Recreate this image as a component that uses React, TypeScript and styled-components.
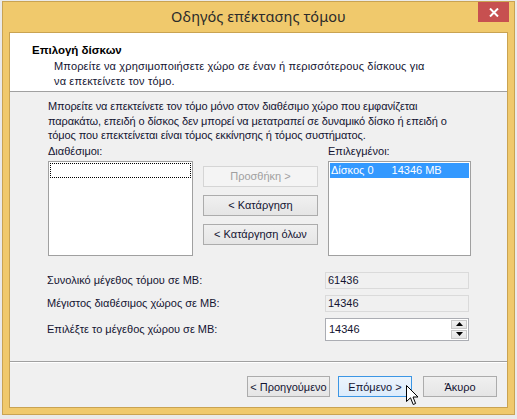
import React from "react";
import styled, { createGlobalStyle } from "styled-components";

const GlobalStyle = createGlobalStyle`
  html, body {
    margin: 0;
    padding: 0;
    background: #eaeaea;
    width: 517px;
    height: 419px;
    overflow: hidden;
  }
  * { box-sizing: border-box; }
`;

const Desktop = styled.div`
  position: relative;
  width: 517px;
  height: 419px;
  padding: 1px 0 0 2px;
  font-family: "Liberation Sans", Arial, sans-serif;
  font-size: 11px;
  color: #141432;
`;

const Window = styled.div`
  width: 513px;
  height: 414px;
  background: #f0c96c;
  border: 1px solid #c9a352;
  display: flex;
  flex-direction: column;
  padding: 0 6px 6px 6px;
`;

const TitleBar = styled.div`
  height: 30px;
  display: grid;
  grid-template-columns: 1fr auto 1fr;
  align-items: start;
`;

const TitleText = styled.div`
  grid-column: 2;
  padding-top: 4px;
  font-family: "Noto Sans", "Open Sans", sans-serif;
  font-size: 14.5px;
  color: #2b2b2b;
  letter-spacing: 0.1px;
`;

const CloseButton = styled.div`
  grid-column: 3;
  justify-self: end;
  margin-right: -1px;
  width: 31px;
  height: 20px;
  background: #c75050;
  display: flex;
  align-items: center;
  justify-content: center;
`;

const Client = styled.div`
  flex: 1;
  border: 1px solid #c9a352;
  background: #f0f0f0;
  display: flex;
  flex-direction: column;
`;

const Header = styled.div`
  height: 59px;
  background: #ffffff;
  border-bottom: 1px solid #a0a0a0;
  padding: 10px 0 0 22px;
`;

const HeaderTitle = styled.div`
  font-weight: bold;
  color: #000;
  font-size: 11.5px;
  line-height: 14px;
  margin-bottom: 2px;
`;

const HeaderSub = styled.div`
  padding-left: 22px;
  line-height: 15px;
  white-space: nowrap;
  letter-spacing: 0.15px;
`;

const Body = styled.div`
  padding: 7px 0 0 38px;
  display: flex;
  flex-direction: column;
`;

const Paragraph = styled.div`
  line-height: 14.5px;
  white-space: nowrap;
  letter-spacing: -0.1px;
`;

const PickerGrid = styled.div`
  display: grid;
  grid-template-columns: 145px 115px 143px;
  column-gap: 10px;
  grid-template-rows: 15px 95px;
  row-gap: 2px;
  margin-top: 1px;
`;

const ListLabel = styled.div<{ $col: number }>`
  grid-column: ${({ $col }) => $col};
  line-height: 15px;
`;

const ListBox = styled.div`
  border: 1px solid #a0a0a0;
  background: #fff;
  padding: 1px;
`;

const FocusRow = styled.div`
  height: 15px;
  border: 1px dotted #000;
`;

const SelectedRow = styled.div`
  height: 15px;
  background: #3399ff;
  color: #fff;
  display: flex;
  align-items: center;
  padding-left: 1px;
  gap: 18px;
`;

const ButtonStack = styled.div`
  display: flex;
  flex-direction: column;
  gap: 8px;
  padding-top: 5px;
`;

const Button = styled.div<{ $disabled?: boolean; $focused?: boolean; $width?: number }>`
  height: 21px;
  width: ${({ $width }) => ($width ? `${$width}px` : "auto")};
  display: flex;
  align-items: center;
  justify-content: center;
  border: 1px solid
    ${({ $disabled, $focused }) => ($disabled ? "#d5d5d5" : $focused ? "#3c96e4" : "#acacac")};
  background: ${({ $disabled, $focused }) =>
    $disabled
      ? "#f4f4f4"
      : $focused
      ? "linear-gradient(#ecf4fc, #dcecfc)"
      : "linear-gradient(#f0f0f0, #e5e5e5)"};
  color: ${({ $disabled }) => ($disabled ? "#a0a0a0" : "#141432")};
  white-space: nowrap;
`;

const FieldRows = styled.div`
  display: grid;
  grid-template-columns: 278px 144px;
  row-gap: 6px;
  margin-top: 16px;
  margin-left: -1px;
  align-items: center;
`;

const FieldLabel = styled.div`
  line-height: 15px;
`;

const ReadOnlyField = styled.div`
  height: 17px;
  border: 1px solid #dadada;
  background: #f0f0f0;
  padding-left: 2px;
  display: flex;
  align-items: center;
`;

const SpinBox = styled.div`
  height: 23px;
  border: 1px solid #abadb3;
  background: #fff;
  display: flex;
  align-items: center;
  padding: 0 1px 0 3px;
`;

const SpinValue = styled.div`
  flex: 1;
`;

const SpinButtons = styled.div`
  display: flex;
  flex-direction: column;
  gap: 1px;
`;

const SpinArrow = styled.div`
  width: 16px;
  height: 9px;
  border: 1px solid #c8c8c8;
  background: linear-gradient(#f2f2f2, #e4e4e4);
  display: flex;
  align-items: center;
  justify-content: center;
`;

const Separator = styled.div`
  margin-top: auto;
  height: 2px;
  border-top: 1px solid #a0a0a0;
  border-bottom: 1px solid #ffffff;
`;

const Footer = styled.div`
  display: flex;
  justify-content: flex-end;
  gap: 11px;
  padding: 13px 10px 10px 0;
`;

const FooterGroup = styled.div`
  display: flex;
  gap: 8px;
`;

const Cursor = styled.svg`
  position: absolute;
  left: 406px;
  top: 385px;
`;

const Triangle: React.FC<{ up?: boolean }> = ({ up }) => (
  <svg width="7" height="4" viewBox="0 0 7 4">
    <path d={up ? "M0 4 L3.5 0 L7 4 Z" : "M0 0 L3.5 4 L7 0 Z"} fill="#000" />
  </svg>
);

const App: React.FC = () => (
  <>
    <GlobalStyle />
    <Desktop>
      <Window>
        <TitleBar>
          <TitleText>Οδηγός επέκτασης τόμου</TitleText>
          <CloseButton>
            <svg width="10" height="9" viewBox="0 0 10 9">
              <path d="M1 0.5 L9 8.5 M9 0.5 L1 8.5" stroke="#fff" strokeWidth="2" />
            </svg>
          </CloseButton>
        </TitleBar>
        <Client>
          <Header>
            <HeaderTitle>Επιλογή δίσκων</HeaderTitle>
            <HeaderSub>
              Μπορείτε να χρησιμοποιήσετε χώρο σε έναν ή περισσότερους δίσκους για
              <br />
              να επεκτείνετε τον τόμο.
            </HeaderSub>
          </Header>
          <Body>
            <Paragraph>
              Μπορείτε να επεκτείνετε τον τόμο μόνο στον διαθέσιμο χώρο που εμφανίζεται
              <br />
              παρακάτω, επειδή ο δίσκος δεν μπορεί να μετατραπεί σε δυναμικό δίσκο ή επειδή ο
              <br />
              τόμος που επεκτείνεται είναι τόμος εκκίνησης ή τόμος συστήματος.
            </Paragraph>
            <PickerGrid>
              <ListLabel $col={1}>Διαθέσιμοι:</ListLabel>
              <ListLabel $col={3}>Επιλεγμένοι:</ListLabel>
              <ListBox>
                <FocusRow />
              </ListBox>
              <ButtonStack>
                <Button $disabled>Προσθήκη &gt;</Button>
                <Button>&lt; Κατάργηση</Button>
                <Button>&lt; Κατάργηση όλων</Button>
              </ButtonStack>
              <ListBox>
                <SelectedRow>
                  <span>Δίσκος 0</span>
                  <span>14346 MB</span>
                </SelectedRow>
              </ListBox>
            </PickerGrid>
            <FieldRows>
              <FieldLabel>Συνολικό μέγεθος τόμου σε MB:</FieldLabel>
              <ReadOnlyField>61436</ReadOnlyField>
              <FieldLabel>Μέγιστος διαθέσιμος χώρος σε MB:</FieldLabel>
              <ReadOnlyField>14346</ReadOnlyField>
              <FieldLabel>Επιλέξτε το μέγεθος χώρου σε MB:</FieldLabel>
              <SpinBox>
                <SpinValue>14346</SpinValue>
                <SpinButtons>
                  <SpinArrow>
                    <Triangle up />
                  </SpinArrow>
                  <SpinArrow>
                    <Triangle />
                  </SpinArrow>
                </SpinButtons>
              </SpinBox>
            </FieldRows>
          </Body>
          <Separator />
          <Footer>
            <FooterGroup>
              <Button $width={83}>&lt; Προηγούμενο</Button>
              <Button $width={74} $focused>
                Επόμενο &gt;
              </Button>
            </FooterGroup>
            <Button $width={74}>Άκυρο</Button>
          </Footer>
        </Client>
      </Window>
      <Cursor width="13" height="21" viewBox="0 0 13 21">
        <path
          d="M0.5 0.5 L0.5 16.5 L4.5 12.8 L7.2 19.5 L9.6 18.5 L7 12 L12 12 Z"
          fill="#fff"
          stroke="#000"
          strokeWidth="1"
          strokeLinejoin="round"
        />
      </Cursor>
    </Desktop>
  </>
);

export default App;
